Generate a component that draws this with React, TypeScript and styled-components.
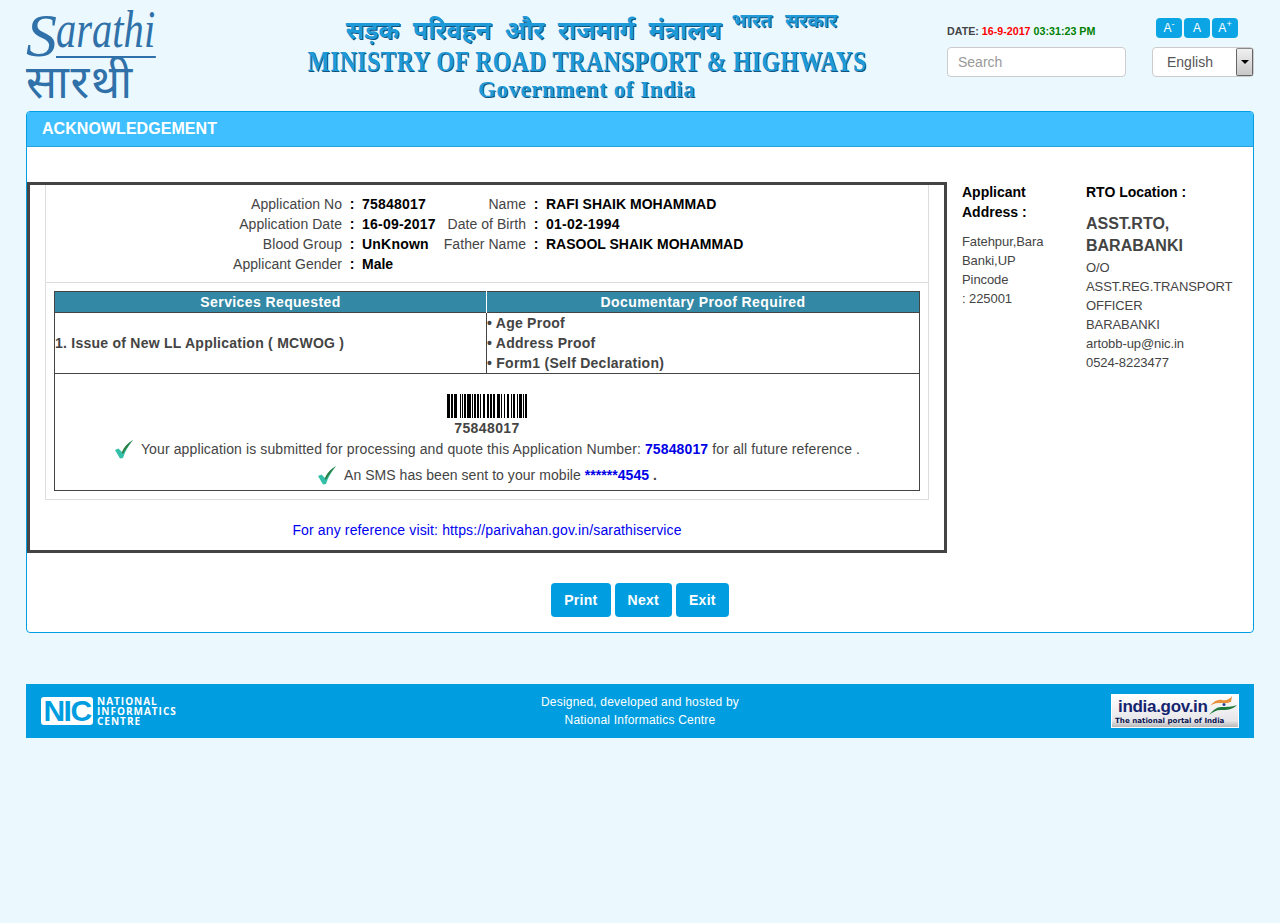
import { createGlobalStyle, styled } from "styled-components";

const GlobalStyle = createGlobalStyle`
  html, body { margin: 0; padding: 0; background: #ebf9ff; }
  body {
    font-family: "Liberation Sans", Arial, sans-serif;
    font-size: 14px;
    line-height: 20px;
    color: #444;
    min-height: 923px;
  }
  * { box-sizing: border-box; }
`;

const Page = styled.div`
  padding: 0 26px;
`;

const Header = styled.header`
  display: grid;
  grid-template-columns: 280px 562px 1fr;
  height: 111px;
`;

const SarathiLogo = styled.div`
  padding-top: 6px;
  width: 132px;
  color: #2f71a8;
  font-family: "Liberation Serif", serif;
`;

const SarathiLatin = styled.div`
  display: flex;
  align-items: flex-end;
  height: 52px;
  font-style: italic;
  white-space: nowrap;
`;

const SarathiInitial = styled.span`
  flex: none;
  width: 30px;
  font-size: 62px;
  line-height: 62px;
  margin-bottom: -8px;
`;

const SarathiRest = styled.span`
  flex: none;
  width: 128px;
  font-size: 52px;
  line-height: 52px;
  border-bottom: 2px solid #2f71a8;
  transform: scaleX(0.78);
  transform-origin: left;
`;

const SarathiHindi = styled.div`
  font-family: "Noto Sans", sans-serif;
  font-size: 46px;
  line-height: 44px;
  letter-spacing: 1.5px;
  white-space: nowrap;
`;

const Ministry = styled.div`
  display: flex;
  flex-direction: column;
  align-items: center;
  padding-top: 8px;
  color: #1f9ad8;
  font-family: "Liberation Serif", serif;
  font-weight: 700;
  text-shadow: 1px 1px 0 #15537c;
  white-space: nowrap;
`;

const MinistryHindi = styled.div`
  display: flex;
  align-items: flex-start;
  height: 39px;
  padding-left: 9px;
  font-family: "Noto Sans", sans-serif;
  font-size: 25px;
  line-height: 42px;
  word-spacing: 7px;
`;

const MinistryHindiSmall = styled.span`
  margin-left: 10px;
  font-size: 19px;
  line-height: 24px;
  word-spacing: 8px;
`;

const MinistryEnglish = styled.div`
  font-size: 29px;
  line-height: 28px;
  letter-spacing: 0.6px;
  transform: scaleX(0.81);
`;

const MinistryGov = styled.div`
  font-size: 24px;
  line-height: 28px;
  letter-spacing: 0.6px;
  transform: scaleX(0.955);
`;

const HeaderTools = styled.div`
  display: grid;
  grid-template-columns: 205px 102px;
  grid-template-rows: 47px 30px;
  padding-left: 79px;
`;

const DateLine = styled.div`
  align-self: end;
  padding-bottom: 10px;
  font-size: 10.7px;
  line-height: 12px;
  font-weight: 700;
  color: #444;
`;

const DatePart = styled.span<{ $color: string }>`
  color: ${(props) => props.$color};
`;

const FontSizes = styled.div`
  display: flex;
  gap: 2px;
  padding: 18px 0 0 4px;
`;

const FontSizeButton = styled.button`
  width: 26px;
  height: 20px;
  padding: 0;
  border: 0;
  border-radius: 4px;
  background: #0ba5e6;
  color: #fff;
  font: 12px/20px "Liberation Sans", Arial, sans-serif;

  sup {
    font-size: 9px;
    line-height: 0;
  }
`;

const SearchInput = styled.input`
  width: 179px;
  height: 30px;
  padding: 0 10px;
  border: 1px solid #ccc;
  border-radius: 4px;
  background: #fff;
  font: 14px "Liberation Sans", Arial, sans-serif;

  &::placeholder {
    color: #999;
    opacity: 1;
  }
`;

const LangSelect = styled.div`
  display: flex;
  justify-content: space-between;
  height: 30px;
  border: 1px solid #ccc;
  border-radius: 4px;
  background: #fff;
  padding-left: 14px;
  line-height: 28px;
  color: #555;
`;

const LangArrow = styled.span`
  display: flex;
  align-items: center;
  justify-content: center;
  width: 17px;
  height: 28px;
  border: 1px solid #666;
  border-top-color: #888;
  border-radius: 2px;
  background: linear-gradient(#f0f0f0, #c8c8c8);

  &::after {
    content: "";
    border: 4px solid transparent;
    border-top: 4px solid #000;
    border-bottom: 0;
  }
`;

const Panel = styled.section`
  border: 1px solid #009ee0;
  border-radius: 4px;
  background: #fff;
  overflow: hidden;
`;

const PanelHeading = styled.h1`
  margin: 0;
  height: 35px;
  padding-left: 15px;
  background: #3fbfff;
  border-bottom: 1px solid #2a9fd8;
  color: #fff;
  font-size: 16px;
  line-height: 33px;
  font-weight: 700;
  letter-spacing: 0.05px;
`;

const PanelBody = styled.div`
  display: grid;
  grid-template-columns: 920px 124px 1fr;
  padding-top: 35px;
`;

const AckBox = styled.div`
  height: 371px;
  border: 3px solid #444;
  padding: 0 15px;
`;

const AckTable = styled.div`
  border: 1px solid #ddd;
  border-top: 0;
`;

const InfoGrid = styled.div`
  display: grid;
  grid-template-columns: 296px 20px 80px 84px 20px 1fr;
  grid-auto-rows: 20px;
  height: 98px;
  padding-top: 9px;
  border-bottom: 1px solid #ddd;
`;

const InfoLabel = styled.div`
  text-align: right;
  white-space: nowrap;
  letter-spacing: 0.05px;
`;

const InfoColon = styled.b`
  text-align: center;
  color: #000;
`;

const InfoValue = styled.b`
  color: #000;
  white-space: nowrap;
`;

const DigitValue = styled(InfoValue)`
  letter-spacing: 0.22px;
`;

const TableWrap = styled.div`
  padding: 8px;
`;

const Services = styled.table`
  width: 866px;
  border-collapse: collapse;
  table-layout: fixed;
  border: 1px solid #444;
  color: #444;
  font-weight: 700;
`;

const ServiceHead = styled.th<{ $width?: number }>`
  width: ${(props) => (props.$width ? `${props.$width}px` : "auto")};
  height: 20px;
  padding: 0;
  background: #3388a5;
  color: #fff;
  border-right: 1px solid #fff;
  letter-spacing: 0.4px;
  line-height: 20px;

  &:last-child {
    border-right: 0;
  }
`;

const ServiceCell = styled.td`
  height: 60px;
  padding: 0;
  letter-spacing: 0.25px;
  border: 1px solid #444;
`;

const SubmitCell = styled.td`
  padding: 20px 0 0;
  height: 117px;
  text-align: center;
  border: 1px solid #444;
  font-weight: 400;
  vertical-align: top;
`;

const BarcodeNumber = styled.div`
  font-weight: 700;
  line-height: 20px;
  letter-spacing: 0.4px;
`;

const Notice = styled.div<{ $gap: number; $spacing: number }>`
  display: flex;
  justify-content: center;
  align-items: center;
  gap: 7px;
  margin-top: ${(props) => props.$gap}px;
  height: 20px;
  white-space: nowrap;
  letter-spacing: ${(props) => props.$spacing}px;
`;

const Strong = styled.b`
  color: #0000e6;
`;

const VisitLine = styled.div`
  margin-top: 20px;
  text-align: center;
  color: #0000f0;
  letter-spacing: 0.14px;
`;

const SideColumn = styled.div`
  padding-left: 15px;
  font-size: 13px;
  line-height: 19px;
  letter-spacing: -0.08px;
`;

const SideTitle = styled.div`
  font-size: 14px;
  line-height: 20px;
  font-weight: 700;
  color: #000;
  letter-spacing: 0;
`;

const SideText = styled.div`
  margin-top: 10px;
`;

const RtoName = styled.div`
  margin-top: 11px;
  margin-bottom: 1px;
  font-size: 16px;
  line-height: 22px;
  font-weight: 700;
  letter-spacing: 0;
`;

const ButtonRow = styled.div`
  display: flex;
  justify-content: center;
  gap: 4px;
  padding: 30px 0 15px;
`;

const ActionButton = styled.button`
  height: 34px;
  padding: 0 13px;
  border: 0;
  border-radius: 4px;
  background: #009ee0;
  color: #fff;
  font: 700 14px/34px "Liberation Sans", Arial, sans-serif;
  letter-spacing: 0.28px;
`;

const Footer = styled.footer`
  display: grid;
  grid-template-columns: 1fr auto 1fr;
  align-items: center;
  height: 54px;
  margin-top: 51px;
  padding: 0 15px;
  background: #009ee0;
  color: #fff;
  font-size: 12px;
  line-height: 18px;
`;

const NicLogo = styled.div`
  display: flex;
  align-items: center;
  gap: 4px;
`;

const NicBadge = styled.div`
  width: 52px;
  height: 28px;
  border: 2px solid #fff;
  border-radius: 3px;
  background: #fff;
  color: #009ee0;
  font: 700 30px/24px "Liberation Sans", Arial, sans-serif;
  text-align: center;
  letter-spacing: -1.5px;
`;

const NicName = styled.div`
  font: 700 10px/10px "Open Sans", sans-serif;
  letter-spacing: 1px;
`;

const FooterCredit = styled.div`
  text-align: center;
  letter-spacing: 0.2px;
`;

const IndiaBadge = styled.div`
  position: relative;
  justify-self: end;
  width: 128px;
  height: 34px;
  padding: 2px 3px;
  background: linear-gradient(#fff, #e6e6ea 80%, #b8b8b8);
  border: 1px solid #fff;
  color: #15246e;
`;

const IndiaName = styled.div`
  padding-left: 3px;
  font: 700 17px/19px "Liberation Sans", Arial, sans-serif;
  letter-spacing: -0.3px;
`;

const IndiaTag = styled.div`
  font: 700 7.1px/9px "DejaVu Sans", sans-serif;
  color: #0a1450;
  white-space: nowrap;
`;

const IndiaFlag = styled.svg`
  position: absolute;
  right: 0;
  top: 1px;
`;

const barWidths = [
  3, 1, 2, 1, 3, 3, 1, 1, 1, 1, 2, 1, 4, 1, 1, 1, 2, 1, 2, 1, 1, 2, 2, 2, 2, 1, 2, 1, 2, 2, 3, 1, 1, 2, 1, 2, 2, 2, 1, 1, 2, 2, 1,
  1, 3, 1, 1, 1, 2,
];

const Barcode = () => {
  let x = 0;
  const bars = barWidths.map((width, index) => {
    const bar = index % 2 === 0 ? <rect key={index} x={x} y={0} width={width} height={24} fill="#000" /> : null;
    x += width;
    return bar;
  });
  return (
    <svg width={80} height={24} style={{ display: "block", margin: "0 auto" }}>
      {bars}
    </svg>
  );
};

const CheckIcon = () => (
  <svg width={20} height={20} viewBox="0 0 20 20">
    <path d="M1 11 L4.5 9.5 L8 13 C10 8 14 4 19 1 C15 6 11 12 9 19 L6 19.5 Z" fill="#34bfa8" />
    <path d="M8 13 C10 8 14 4 19 1 C15 6 11.5 10 9.5 14 L8.5 15 Z" fill="#2f7d3c" />
  </svg>
);

const App = () => {
  return (
    <Page>
      <GlobalStyle />
      <Header>
        <SarathiLogo>
          <SarathiLatin>
            <SarathiInitial>S</SarathiInitial>
            <SarathiRest>arathi</SarathiRest>
          </SarathiLatin>
          <SarathiHindi>सारथी</SarathiHindi>
        </SarathiLogo>
        <Ministry>
          <MinistryHindi>
            सड़क परिवहन और राजमार्ग मंत्रालय
            <MinistryHindiSmall>भारत सरकार</MinistryHindiSmall>
          </MinistryHindi>
          <MinistryEnglish>MINISTRY OF ROAD TRANSPORT &amp; HIGHWAYS</MinistryEnglish>
          <MinistryGov>Government of India</MinistryGov>
        </Ministry>
        <HeaderTools>
          <DateLine>
            DATE: <DatePart $color="#f00">16-9-2017</DatePart> <DatePart $color="#008000">03:31:23 PM</DatePart>
          </DateLine>
          <FontSizes>
            <FontSizeButton>
              A<sup>-</sup>
            </FontSizeButton>
            <FontSizeButton>A</FontSizeButton>
            <FontSizeButton>
              A<sup>+</sup>
            </FontSizeButton>
          </FontSizes>
          <SearchInput placeholder="Search" />
          <LangSelect>
            English
            <LangArrow />
          </LangSelect>
        </HeaderTools>
      </Header>
      <Panel>
        <PanelHeading>ACKNOWLEDGEMENT</PanelHeading>
        <PanelBody>
          <AckBox>
            <AckTable>
              <InfoGrid>
                <InfoLabel>Application No</InfoLabel>
                <InfoColon>:</InfoColon>
                <DigitValue>75848017</DigitValue>
                <InfoLabel>Name</InfoLabel>
                <InfoColon>:</InfoColon>
                <InfoValue>RAFI SHAIK MOHAMMAD</InfoValue>
                <InfoLabel>Application Date</InfoLabel>
                <InfoColon>:</InfoColon>
                <DigitValue>16-09-2017</DigitValue>
                <InfoLabel>Date of Birth</InfoLabel>
                <InfoColon>:</InfoColon>
                <DigitValue>01-02-1994</DigitValue>
                <InfoLabel>Blood Group</InfoLabel>
                <InfoColon>:</InfoColon>
                <DigitValue>UnKnown</DigitValue>
                <InfoLabel>Father Name</InfoLabel>
                <InfoColon>:</InfoColon>
                <InfoValue>RASOOL SHAIK MOHAMMAD</InfoValue>
                <InfoLabel>Applicant Gender</InfoLabel>
                <InfoColon>:</InfoColon>
                <InfoValue>Male</InfoValue>
              </InfoGrid>
              <TableWrap>
                <Services>
                  <thead>
                    <tr>
                      <ServiceHead $width={432}>Services Requested</ServiceHead>
                      <ServiceHead>Documentary Proof Required</ServiceHead>
                    </tr>
                  </thead>
                  <tbody>
                    <tr>
                      <ServiceCell>1. Issue of New LL Application ( MCWOG )</ServiceCell>
                      <ServiceCell>
                        • Age Proof
                        <br />• Address Proof
                        <br />• Form1 (Self Declaration)
                      </ServiceCell>
                    </tr>
                    <tr>
                      <SubmitCell colSpan={2}>
                        <Barcode />
                        <BarcodeNumber>75848017</BarcodeNumber>
                        <Notice $gap={1} $spacing={0.12}>
                          <CheckIcon />
                          <span>
                            Your application is submitted for processing and quote this Application Number:{" "}
                            <Strong>75848017</Strong> for all future reference .
                          </span>
                        </Notice>
                        <Notice $gap={6} $spacing={0.05}>
                          <CheckIcon />
                          <span>
                            An SMS has been sent to your mobile <Strong>******4545</Strong> <b>.</b>
                          </span>
                        </Notice>
                      </SubmitCell>
                    </tr>
                  </tbody>
                </Services>
              </TableWrap>
            </AckTable>
            <VisitLine>For any reference visit: https://parivahan.gov.in/sarathiservice</VisitLine>
          </AckBox>
          <SideColumn>
            <SideTitle>
              Applicant
              <br />
              Address :
            </SideTitle>
            <SideText>
              Fatehpur,Bara
              <br />
              Banki,UP
              <br />
              Pincode
              <br />: 225001
            </SideText>
          </SideColumn>
          <SideColumn>
            <SideTitle>RTO Location :</SideTitle>
            <RtoName>
              ASST.RTO,
              <br />
              BARABANKI
            </RtoName>
            O/O
            <br />
            ASST.REG.TRANSPORT
            <br />
            OFFICER
            <br />
            BARABANKI
            <br />
            artobb-up@nic.in
            <br />
            0524-8223477
          </SideColumn>
        </PanelBody>
        <ButtonRow>
          <ActionButton>Print</ActionButton>
          <ActionButton>Next</ActionButton>
          <ActionButton>Exit</ActionButton>
        </ButtonRow>
      </Panel>
      <Footer>
        <NicLogo>
          <NicBadge>NIC</NicBadge>
          <NicName>
            NATIONAL
            <br />
            INFORMATICS
            <br />
            CENTRE
          </NicName>
        </NicLogo>
        <FooterCredit>
          Designed, developed and hosted by
          <br />
          National Informatics Centre
        </FooterCredit>
        <IndiaBadge>
          <IndiaName>india.gov.in</IndiaName>
          <IndiaTag>The national portal of India</IndiaTag>
          <IndiaFlag width={30} height={20} viewBox="0 0 30 20">
            <path d="M2 10 C6 5 10 3 14 4 C18 5 22 3 24 0 L23 6 C19 8 15 7 12 7 C8 7 5 8 2 10 Z" fill="#e8913a" />
            <path d="M2 10 C5 8 8 7 12 7 C15 7 19 8 23 6 L25 9 C19 11 15 10 11 10 C7 10 4 12 2 14 Z" fill="#f4f4f0" />
            <path d="M1 19 C5 14 9 11 13 11 C18 11 24 11 29 9 C24 14 18 14 13 14 C8 14 5 16 1 19 Z" fill="#1d7a3a" />
            <circle cx={16} cy={8.5} r={1.5} fill="#2a3f9a" />
          </IndiaFlag>
        </IndiaBadge>
      </Footer>
    </Page>
  );
};

export default App;
